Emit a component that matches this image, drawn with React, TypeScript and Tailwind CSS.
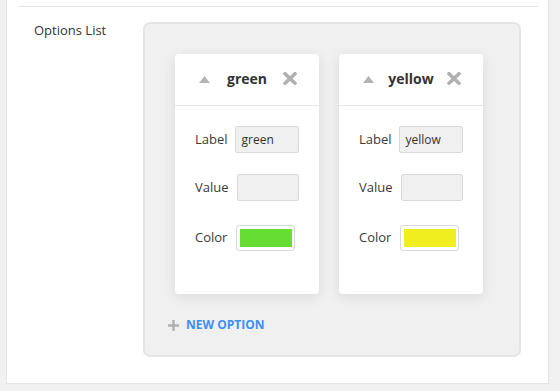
const font = { fontFamily: '"Open Sans", "Noto Sans", sans-serif' };

type Opt = { name: string; color: string };

const options: Opt[] = [
  { name: "green", color: "#66dd33" },
  { name: "yellow", color: "#f0ee1f" },
];

function OptionCard({ opt }: { opt: Opt }) {
  return (
    <div className="w-[144px] h-[240px] bg-white rounded-[4px] shadow-[0_3px_14px_rgba(0,0,0,0.09)]">
      <div className="h-[52px] border-b border-[#e6e6e6] grid grid-cols-[14px_1fr_14px] items-center px-[23px]">
        <svg width="11" height="7" viewBox="0 0 11 7" className="ml-px">
          <polygon points="5.5,0 11,7 0,7" fill="#b4b4b4" />
        </svg>
        <span className="text-center text-[14px] font-bold text-[#333] leading-[18px] -mt-[2px]">{opt.name}</span>
        <svg width="14" height="13" viewBox="0 0 14 13" className="-mt-[2px] ml-[1px]">
          <path d="M2 1.8 L12 11.2 M12 1.8 L2 11.2" stroke="#b0b0b0" strokeWidth="3.6" strokeLinecap="round" />
        </svg>
      </div>
      <div className="pt-[20px] pl-[20px] text-[13px] text-[#3a3a3a]">
        <div className="flex items-center h-[27px]">
          <span>Label</span>
          <div className="ml-[7px] w-[64px] h-[27px] bg-[#f0f0f0] border border-[#d9d9d9] rounded-[2px] pl-[6px] text-[12px] leading-[25px] text-[#333]">
            {opt.name}
          </div>
        </div>
        <div className="flex items-center h-[27px] mt-[21px]">
          <span>Value</span>
          <div className="ml-[8px] w-[62px] h-[27px] bg-[#f0f0f0] border border-[#d9d9d9] rounded-[2px]" />
        </div>
        <div className="flex items-center h-[26px] mt-[24px]">
          <span>Color</span>
          <div className="ml-[9px] w-[59px] h-[26px] bg-white border border-[#d4dcd4] rounded-[3px] pt-[3px] pl-[3px]">
            <div className="w-[52px] h-[18px]" style={{ backgroundColor: opt.color }} />
          </div>
        </div>
      </div>
    </div>
  );
}

export default function App() {
  return (
    <div className="h-[391px] w-[560px] bg-[#f1f1f1] overflow-hidden" style={font}>
      <div className="ml-[6px] w-[543px] h-[384px] bg-white border-x border-b border-[#e3e3e3]">
        <div className="pt-[6px] pl-[12px] pr-[10px]">
          <div className="h-px bg-[#e6e6e6]" />
        </div>
        <div className="mt-[14px] grid grid-cols-[109px_378px] pl-[27px]">
          <div className="text-[13px] leading-[18px] text-[#333]">Options List</div>
          <div className="mt-px h-[335px] bg-[#f0f0f0] border-2 border-[#e4e4e4] rounded-[7px] pt-[30px] pl-[30px]">
            <div className="flex gap-[20px]">
              {options.map((o) => (
                <OptionCard key={o.name} opt={o} />
              ))}
            </div>
            <div className="mt-[23px] flex items-center -ml-[7px]">
              <svg width="11" height="11" viewBox="0 0 11 11">
                <path d="M5.5 0 V11 M0 5.5 H11" stroke="#b0b0b0" strokeWidth="2.4" />
              </svg>
              <span className="ml-[7px] text-[12px] font-bold leading-[16px] text-[#3d8ef8] uppercase">New option</span>
            </div>
          </div>
        </div>
      </div>
    </div>
  );
}
